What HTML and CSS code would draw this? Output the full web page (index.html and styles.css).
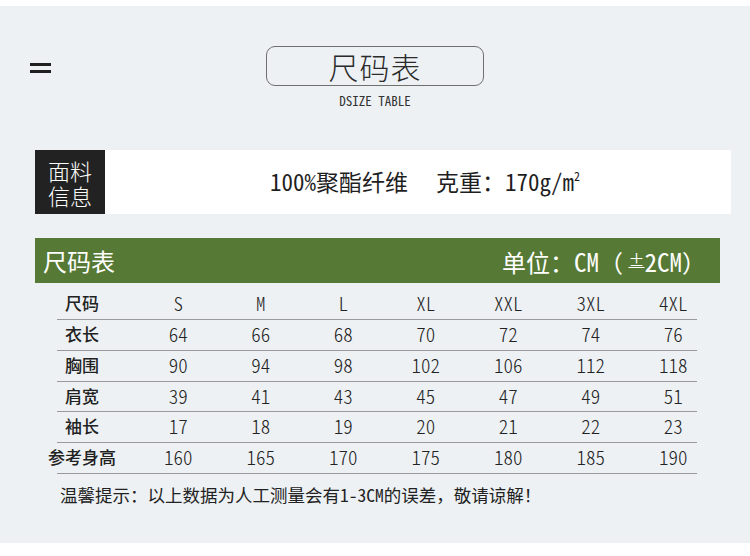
FILE: index.html
```html
<!DOCTYPE html>
<html lang="zh-CN">
<head>
<meta charset="utf-8">
<title>尺码表</title>
<link rel="stylesheet" href="styles.css">
</head>
<body>
<div class="page">
  <header class="head">
    <div class="menu"><span class="bar"></span><span class="bar"></span></div>
    <div class="title-wrap">
      <div class="title-box">尺码表</div>
      <div class="subtitle">DSIZE TABLE</div>
    </div>
    <div></div>
  </header>

  <section class="info">
    <div class="info-label"><span class="il">面料</span><span class="il">信息</span></div>
    <div class="info-text"><span class="num">100%</span>聚酯纤维　 克重：<span class="num">170g/m<sup>2</sup></span></div>
  </section>

  <section class="table">
    <div class="table-head">
      <span class="th-left">尺码表</span>
      <span class="th-right">单位：<span class="num">CM</span>（ <span class="pm">±</span><span class="num">2CM</span>）</span>
    </div>
    <div class="row row-first">
      <div class="grid">
        <span class="lab">尺码</span><span>S</span><span>M</span><span>L</span><span>XL</span><span>XXL</span><span>3XL</span><span>4XL</span>
      </div>
    </div>
    <div class="row">
      <div class="grid">
        <span class="lab">衣长</span><span>64</span><span>66</span><span>68</span><span>70</span><span>72</span><span>74</span><span>76</span>
      </div>
    </div>
    <div class="row">
      <div class="grid">
        <span class="lab">胸围</span><span>90</span><span>94</span><span>98</span><span>102</span><span>106</span><span>112</span><span>118</span>
      </div>
    </div>
    <div class="row">
      <div class="grid">
        <span class="lab">肩宽</span><span>39</span><span>41</span><span>43</span><span>45</span><span>47</span><span>49</span><span>51</span>
      </div>
    </div>
    <div class="row">
      <div class="grid">
        <span class="lab">袖长</span><span>17</span><span>18</span><span>19</span><span>20</span><span>21</span><span>22</span><span>23</span>
      </div>
    </div>
    <div class="row">
      <div class="grid">
        <span class="lab">参考身高</span><span>160</span><span>165</span><span>170</span><span>175</span><span>180</span><span>185</span><span>190</span>
      </div>
    </div>
  </section>

  <p class="note">温馨提示：以上数据为人工测量会有<span class="num">1-3CM</span>的误差，敬请谅解！</p>
</div>
</body>
</html>
```

FILE: styles.css
```css
html, body {
  margin: 0;
  padding: 0;
  background: #ffffff;
}
body {
  font-family: "Noto Sans CJK SC", "Noto Sans", sans-serif;
  color: #1f1f1f;
}
.page {
  margin-top: 6px;
  height: 537px;
  background: #edf1f4;
  overflow: hidden;
}
.num {
  font-family: "Noto Sans CJK SC", sans-serif;
  font-feature-settings: "hwid";
}
.head {
  display: grid;
  grid-template-columns: 1fr auto 1fr;
  align-items: start;
  padding-top: 40px;
}
.menu {
  display: flex;
  flex-direction: column;
  gap: 4px;
  padding-left: 30px;
  padding-top: 17px;
}
.bar {
  display: block;
  width: 21px;
  height: 3px;
  background: #1f1f1f;
}
.title-wrap {
  display: flex;
  flex-direction: column;
  align-items: center;
}
.title-box {
  width: 216px;
  height: 38px;
  border: 1px solid #6f6f6f;
  border-radius: 9px;
  font-size: 30px;
  line-height: 38px;
  text-align: center;
  color: #2a2a2a;
  font-weight: 300;
  letter-spacing: 1px;
}
.subtitle {
  margin-top: 8px;
  font-family: "Noto Sans CJK SC", sans-serif;
  font-feature-settings: "hwid";
  font-size: 13px;
  line-height: 14px;
  color: #333;
}
.info {
  display: flex;
  margin: 42px 19px 0 35px;
  height: 64px;
}
.info-label {
  width: 70px;
  background: #222222;
  color: #ffffff;
  display: flex;
  flex-direction: column;
  align-items: center;
  padding-top: 8px;
  box-sizing: border-box;
  font-weight: 300;
}
.il {
  display: block;
  font-size: 22px;
  line-height: 24px;
  height: 25px;
}
.info-text {
  flex: 1;
  background: #ffffff;
  display: flex;
  align-items: center;
  justify-content: center;
  font-size: 23px;
  padding-left: 14px;
  padding-bottom: 2px;
  box-sizing: border-box;
  color: #1f1f1f;
}
.info-text sup {
  font-size: 12px;
  vertical-align: 10px;
}
.table {
  margin: 24px 30px 0 35px;
}
.table-head {
  height: 45px;
  background: #567a35;
  color: #ffffff;
  display: flex;
  align-items: center;
  justify-content: space-between;
  padding: 0 14px 0 8px;
  font-size: 24px;
}
.th-right .num {
  font-size: 25px;
}
.pm {
  font-size: 16px;
  vertical-align: 6px;
  text-decoration: underline;
}
.row {
  margin: 0 23px 0 22px;
  border-bottom: 1px solid #9a9a9a;
  height: 29.8px;
}
.row-first {
  height: 36px;
}
.grid {
  margin: 0 -24px 0 -16px;
  display: grid;
  grid-template-columns: 96px repeat(7, 82.5px);
  height: 100%;
  align-items: center;
  padding-bottom: 3px;
  box-sizing: border-box;
  font-family: "Noto Sans CJK SC", sans-serif;
  font-feature-settings: "hwid";
  font-size: 19px;
  font-weight: 300;
  color: #222;
}
.row-first .grid {
  padding-top: 2px;
  padding-bottom: 0;
}
.grid span {
  text-align: center;
}
.grid .lab {
  font-size: 17px;
  font-weight: 500;
  padding-right: 14px;
  white-space: nowrap;
}
.note {
  margin: 10px 0 0 60px;
  font-size: 17.5px;
  line-height: 22px;
  color: #222;
}
```
